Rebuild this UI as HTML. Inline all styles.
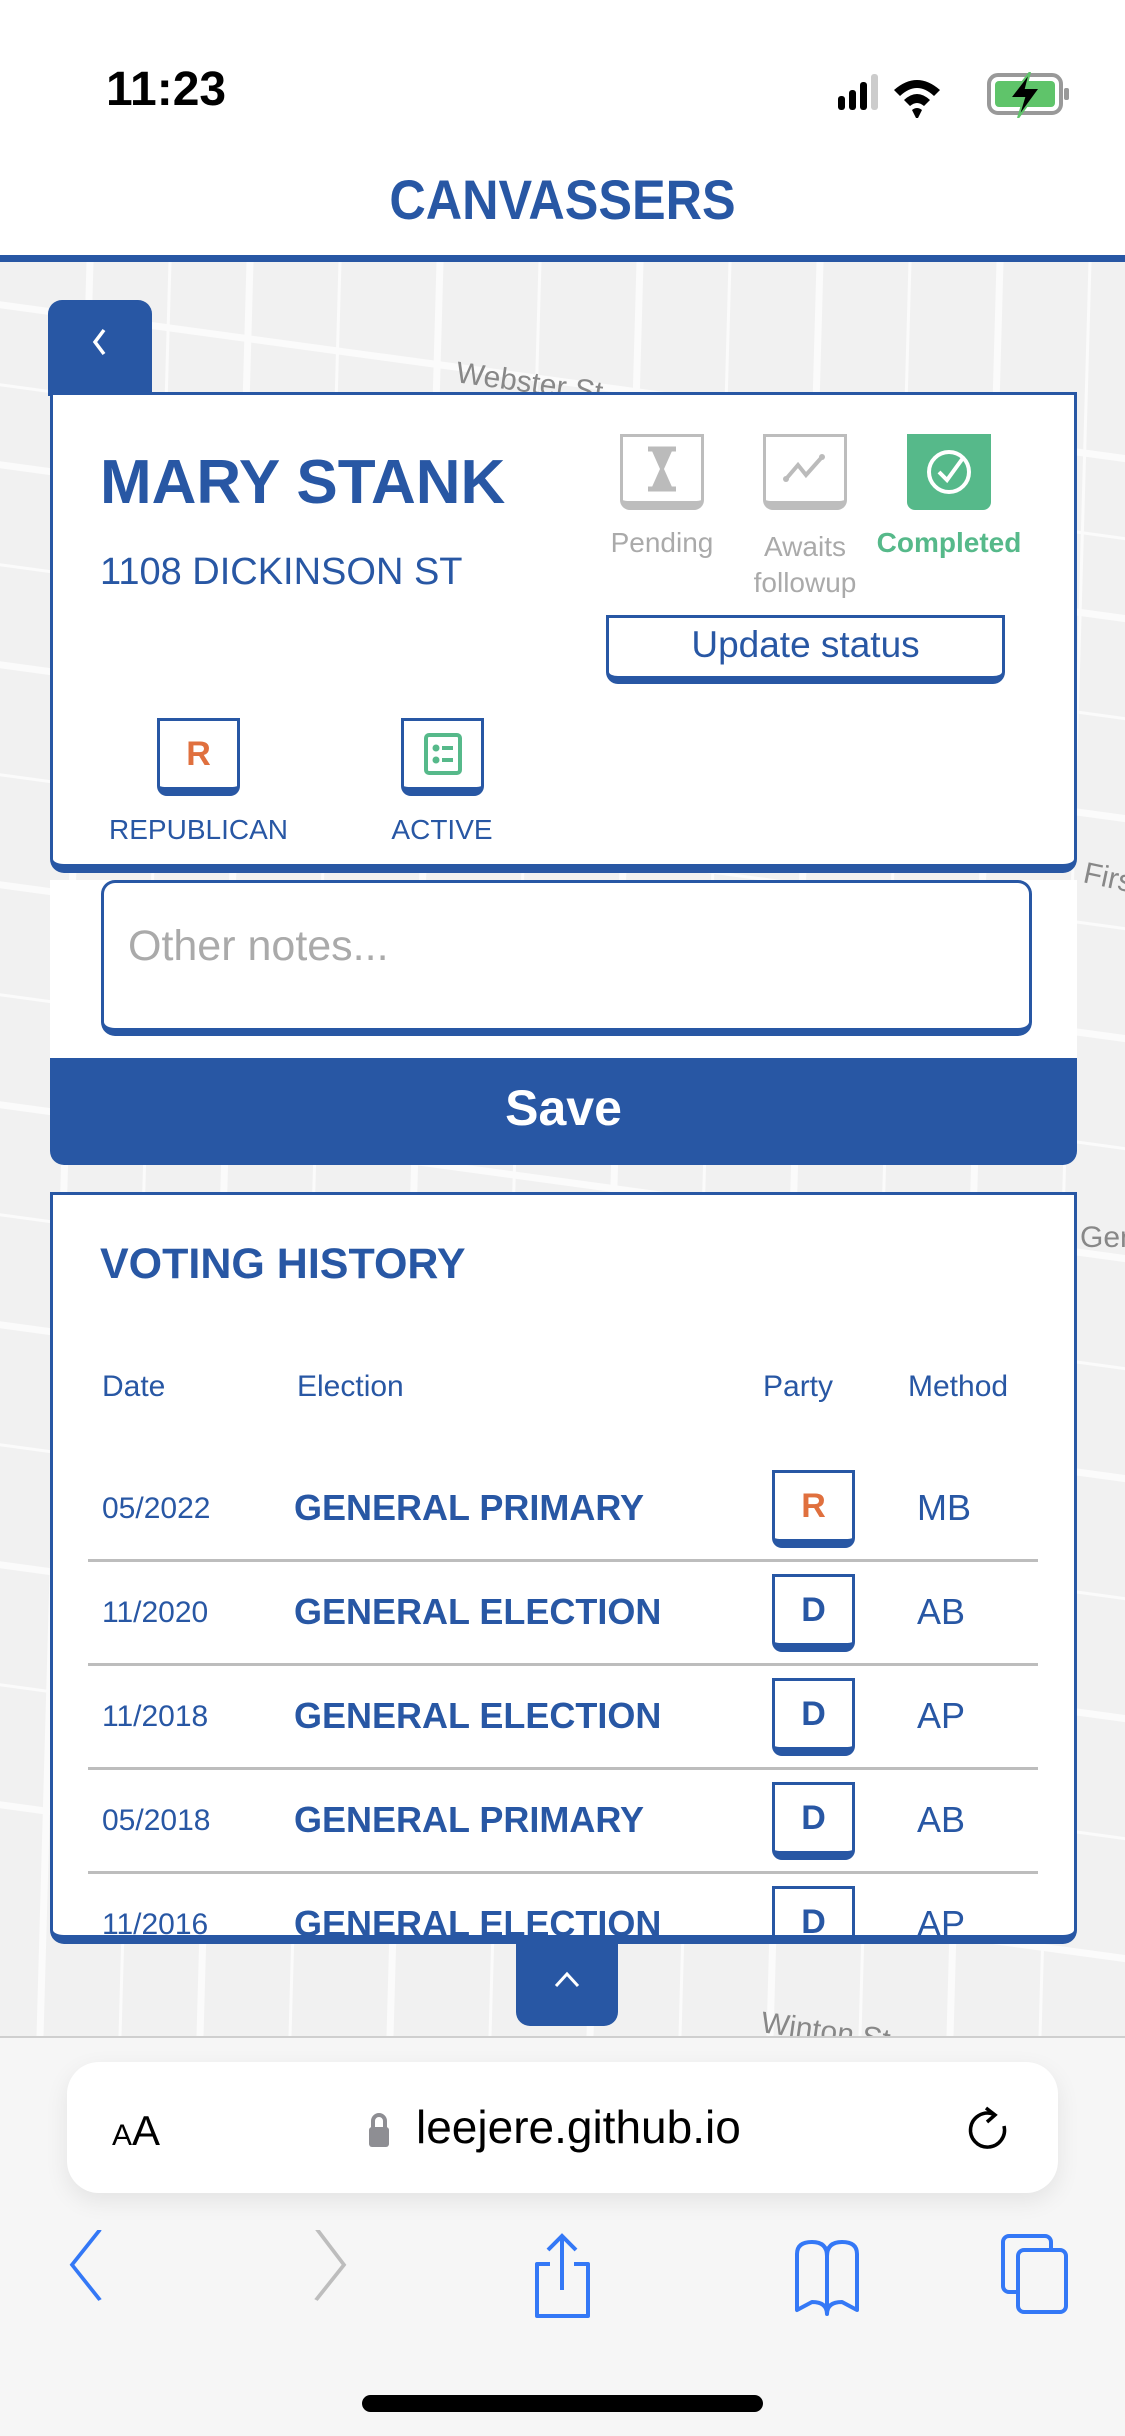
<!DOCTYPE html>
<html><head><meta charset="utf-8"><style>
*{margin:0;padding:0;box-sizing:border-box}
body{width:1125px;height:2436px;position:relative;overflow:hidden;background:#fff;font-family:"Liberation Sans",sans-serif;color:#2857a4}
.a{position:absolute}
.t{position:absolute;white-space:nowrap;line-height:1}
.box{position:absolute;border:3px solid #2857a4;border-bottom-width:9px;border-radius:0 0 10px 10px;background:#fff;display:flex;align-items:center;justify-content:center;font-weight:bold}
.row{position:absolute;left:100px;width:940px}
.d{position:absolute;left:0;font-size:30px}
.e{position:absolute;left:192px;font-size:36px;font-weight:bold}
.m{position:absolute;left:815px;font-size:36px}
.hr{position:absolute;left:85px;width:950px;height:3px;background:#bdbdbd}
</style></head><body>
<div class="t" style="left:106px;top:66px;font-size:48px;font-weight:bold;color:#000">11:23</div>
<svg class="a" style="left:838px;top:72px" width="240" height="46">
<rect x="0" y="24" width="7" height="14" rx="3" fill="#000"/><rect x="11" y="18" width="7" height="20" rx="3" fill="#000"/><rect x="22" y="10" width="7" height="28" rx="3" fill="#000"/><rect x="33" y="2" width="7" height="36" rx="3" fill="#ccc"/>
<path d="M56 18 Q79 -2 102 18 L96 24 Q79 8 62 24Z M66 28 Q79 16 92 28 L86 34 Q79 28 72 34Z M79 48 L74 38 Q79 34 84 38Z" fill="#000"/>
<rect x="151" y="3" width="72" height="38" rx="9" fill="none" stroke="#999" stroke-width="4"/><rect x="157" y="9" width="60" height="26" rx="4" fill="#5fc46a"/><rect x="226" y="16" width="5" height="12" rx="2" fill="#999"/>
<path d="M192 0 L172 26 L186 26 L180 46 L202 16 L188 16 Z" fill="#000" stroke="#5fc46a" stroke-width="2"/>
</svg>
<div class="t" style="left:0;width:1125px;text-align:center;top:172px;font-size:56px;font-weight:bold;transform:scaleX(.9)">CANVASSERS</div>
<div class="a" style="left:0;top:255px;width:1125px;height:7px;background:#2857a4"></div>
<div class="a" style="left:0;top:262px;width:1125px;height:1774px;background:#f1f1f1;overflow:hidden">
<svg width="1125" height="1774" style="position:absolute;left:0;top:0">
<g stroke="#fbfbfb" stroke-width="7" fill="none">
<path d="M-20 40 L1150 200"/><path d="M-20 200 L1150 360"/><path d="M-20 400 L1150 560"/><path d="M-20 620 L1150 780"/><path d="M-20 840 L1150 1000"/><path d="M-20 1060 L1150 1220"/><path d="M-20 1300 L1150 1460"/><path d="M-20 1540 L1150 1700"/>
<path d="M90 0 L40 1774"/><path d="M250 0 L200 1774"/><path d="M440 0 L390 1774"/><path d="M640 0 L590 1774"/><path d="M820 0 L770 1774"/><path d="M1000 0 L950 1774"/>
</g>
<g stroke="#fbfbfb" stroke-width="3" fill="none">
<path d="M-20 120 L1150 280"/><path d="M-20 300 L1150 460"/><path d="M-20 510 L1150 670"/><path d="M-20 730 L1150 890"/><path d="M-20 950 L1150 1110"/><path d="M-20 1180 L1150 1340"/><path d="M-20 1420 L1150 1580"/>
<path d="M170 0 L120 1774"/><path d="M340 0 L290 1774"/><path d="M540 0 L490 1774"/><path d="M730 0 L680 1774"/><path d="M910 0 L860 1774"/><path d="M1090 0 L1040 1774"/>
</g>
<text x="455" y="120" font-size="30" fill="#888" transform="rotate(8 455 120)">Webster St</text>
<text x="1082" y="620" font-size="30" fill="#888" transform="rotate(12 1082 620)">First</text>
<text x="1080" y="985" font-size="30" fill="#888">Gen</text>
<text x="760" y="1770" font-size="30" fill="#888" transform="rotate(8 760 1770)">Winton St</text>
</svg>
</div>
<div class="a" style="left:48px;top:300px;width:104px;height:96px;background:#2857a4;border-radius:14px 14px 0 0"></div>
<svg class="a" style="left:88px;top:326px" width="24" height="34"><path d="M16 4 L7 16 L16 28" stroke="#fff" stroke-width="3.5" fill="none"/></svg>
<div class="a" style="left:50px;top:880px;width:1027px;height:285px;background:#fff;border-radius:0 0 14px 14px;overflow:hidden">
<div class="a" style="left:51px;top:0px;width:931px;height:156px;border:3px solid #2857a4;border-bottom-width:8px;border-radius:14px"></div>
<div class="t" style="left:78px;top:45px;font-size:43px;color:#aaa">Other notes...</div>
<div class="a" style="left:0;top:178px;width:1027px;height:107px;background:#2857a4"></div>
<div class="t" style="left:0;width:1027px;text-align:center;top:203px;font-size:50px;font-weight:bold;color:#fff">Save</div>
</div>
<div class="a" style="left:50px;top:392px;width:1027px;height:481px;background:#fff;border:3px solid #2857a4;border-bottom-width:9px;border-radius:0 0 14px 14px"></div>
<div class="t" style="left:100px;top:452px;font-size:62px;font-weight:bold">MARY STANK</div>
<div class="t" style="left:100px;top:553px;font-size:38px">1108 DICKINSON ST</div>
<div class="box" style="left:620px;top:434px;width:84px;height:76px;border-color:#bdbdbd"><svg width="40" height="48"><path d="M6 4 H34 M6 44 H34" stroke="#bbb" stroke-width="5"/><path d="M10 6 H30 L22 24 L30 42 H10 L18 24Z" fill="#bbb"/></svg></div>
<div class="box" style="left:763px;top:434px;width:84px;height:76px;border-color:#bdbdbd"><svg width="50" height="40"><path d="M6 30 L18 16 L26 26 L42 8" stroke="#bbb" stroke-width="4" fill="none"/><circle cx="6" cy="30" r="3" fill="#bbb"/><circle cx="42" cy="8" r="3" fill="#bbb"/></svg></div>
<div class="a" style="left:907px;top:434px;width:84px;height:76px;background:#56b98a;border-radius:0 0 8px 8px;display:flex;align-items:center;justify-content:center"><svg width="48" height="48"><circle cx="24" cy="24" r="20" stroke="#fff" stroke-width="4" fill="none"/><path d="M14 24 L22 32 L38 10" stroke="#fff" stroke-width="4" fill="none"/></svg></div>
<div class="t" style="left:600px;width:124px;text-align:center;top:529px;font-size:28px;color:#aaa">Pending</div>
<div class="t" style="left:743px;width:124px;text-align:center;top:529px;font-size:28px;color:#aaa;line-height:36px;white-space:normal">Awaits followup</div>
<div class="t" style="left:869px;width:160px;text-align:center;top:529px;font-size:28px;color:#56b98a;font-weight:bold">Completed</div>
<div class="a" style="left:606px;top:615px;width:399px;height:69px;border:3px solid #2857a4;border-bottom-width:8px;border-radius:0 0 12px 12px;background:#fff;text-align:center;font-size:37px;line-height:54px">Update status</div>
<div class="box" style="left:157px;top:718px;width:83px;height:78px;font-size:34px;color:#e0703e">R</div>
<div class="box" style="left:401px;top:718px;width:83px;height:78px"><svg width="40" height="44"><rect x="3" y="3" width="34" height="38" rx="3" stroke="#56b98a" stroke-width="4" fill="none"/><circle cx="13" cy="16" r="3.5" fill="#56b98a"/><circle cx="13" cy="28" r="3.5" fill="#56b98a"/><path d="M19 16 H30 M19 28 H30" stroke="#56b98a" stroke-width="4"/></svg></div>
<div class="t" style="left:100px;width:197px;text-align:center;top:816px;font-size:28px">REPUBLICAN</div>
<div class="t" style="left:362px;width:160px;text-align:center;top:816px;font-size:28px">ACTIVE</div>
<div class="a" style="left:50px;top:1192px;width:1027px;height:752px;background:#fff;border:3px solid #2857a4;border-bottom-width:9px;border-radius:0 0 14px 14px;overflow:hidden">
<div class="t" style="left:47px;top:48px;font-size:43px;font-weight:bold">VOTING HISTORY</div>
<div class="t" style="left:49px;top:177px;font-size:30px">Date</div>
<div class="t" style="left:244px;top:177px;font-size:30px">Election</div>
<div class="t" style="left:710px;top:177px;font-size:30px">Party</div>
<div class="t" style="left:855px;top:177px;font-size:30px">Method</div>
<div class="row" style="top:295px;left:49px"><div class="t d" style="top:4px">05/2022</div><div class="t e">GENERAL PRIMARY</div><div class="t m">MB</div></div>
<div class="row" style="top:399px;left:49px"><div class="t d" style="top:4px">11/2020</div><div class="t e">GENERAL ELECTION</div><div class="t m">AB</div></div>
<div class="row" style="top:503px;left:49px"><div class="t d" style="top:4px">11/2018</div><div class="t e">GENERAL ELECTION</div><div class="t m">AP</div></div>
<div class="row" style="top:607px;left:49px"><div class="t d" style="top:4px">05/2018</div><div class="t e">GENERAL PRIMARY</div><div class="t m">AB</div></div>
<div class="row" style="top:711px;left:49px"><div class="t d" style="top:4px">11/2016</div><div class="t e">GENERAL ELECTION</div><div class="t m">AP</div></div>
<div class="hr" style="left:35px;top:364px"></div><div class="hr" style="left:35px;top:468px"></div><div class="hr" style="left:35px;top:572px"></div><div class="hr" style="left:35px;top:676px"></div>
<div class="box" style="left:719px;top:275px;width:83px;height:78px;font-size:34px;color:#e0703e">R</div>
<div class="box" style="left:719px;top:379px;width:83px;height:78px;font-size:34px">D</div>
<div class="box" style="left:719px;top:483px;width:83px;height:78px;font-size:34px">D</div>
<div class="box" style="left:719px;top:587px;width:83px;height:78px;font-size:34px">D</div>
<div class="box" style="left:719px;top:691px;width:83px;height:78px;font-size:34px">D</div>
</div>
<div class="a" style="left:516px;top:1940px;width:102px;height:86px;background:#2857a4;border-radius:0 0 14px 14px"></div>
<svg class="a" style="left:552px;top:1970px" width="30" height="20"><path d="M4 16 L15 4 L26 16" stroke="#fff" stroke-width="3" fill="none"/></svg>
<div class="a" style="left:0;top:2036px;width:1125px;height:400px;background:#f6f6f6;border-top:2px solid #cfcfcf"></div>
<div class="a" style="left:67px;top:2062px;width:991px;height:131px;background:#fff;border-radius:32px;box-shadow:0 8px 24px rgba(0,0,0,.08)"></div>
<div class="t" style="left:112px;top:2110px;color:#000;font-size:42px"><span style="font-size:30px">A</span>A</div>
<svg class="a" style="left:368px;top:2110px" width="22" height="40"><path d="M5 18 V11 A6 6 0 0 1 17 11 V18" stroke="#8e8e93" stroke-width="4" fill="none"/><rect x="1" y="17" width="20" height="20" rx="3" fill="#8e8e93"/></svg>
<div class="t" style="left:416px;top:2104px;color:#000;font-size:46px">leejere.github.io</div>
<svg class="a" style="left:966px;top:2106px" width="46" height="50"><path d="M27 8 A17 17 0 1 0 38 20" stroke="#000" stroke-width="3.5" fill="none"/><path d="M20 2 L29 9 L21 16" stroke="#000" stroke-width="3.5" fill="none"/></svg>
<svg class="a" style="left:60px;top:2230px" width="1040" height="100" fill="none" stroke-width="4">
<path d="M40 12 L12 56 L40 100" stroke="#3478f6" transform="translate(0,-10) scale(1,.8)"/>
<path d="M256 10 L284 56 L256 100" stroke="#bdbdbd" transform="translate(0,-10) scale(1,.8)"/>
<path d="M502 6 V60 M488 20 L502 6 L516 20" stroke="#3478f6"/>
<path d="M490 34 H477 V86 H528 V34 H514" stroke="#3478f6" stroke-linejoin="round"/>
<path d="M737 80 V24 Q737 12 752 12 Q767 12 767 26 Q767 12 782 12 Q797 12 797 24 V80 L782 72 Q767 72 767 84 Q767 72 752 72Z M767 26 V84" stroke="#3478f6" stroke-linejoin="round"/>
<rect x="943" y="6" width="48" height="56" rx="6" stroke="#3478f6"/>
<rect x="958" y="20" width="48" height="62" rx="6" stroke="#3478f6" fill="#f6f6f6"/>
</svg>
<div class="a" style="left:362px;top:2395px;width:401px;height:17px;background:#000;border-radius:9px"></div>
</body></html>
